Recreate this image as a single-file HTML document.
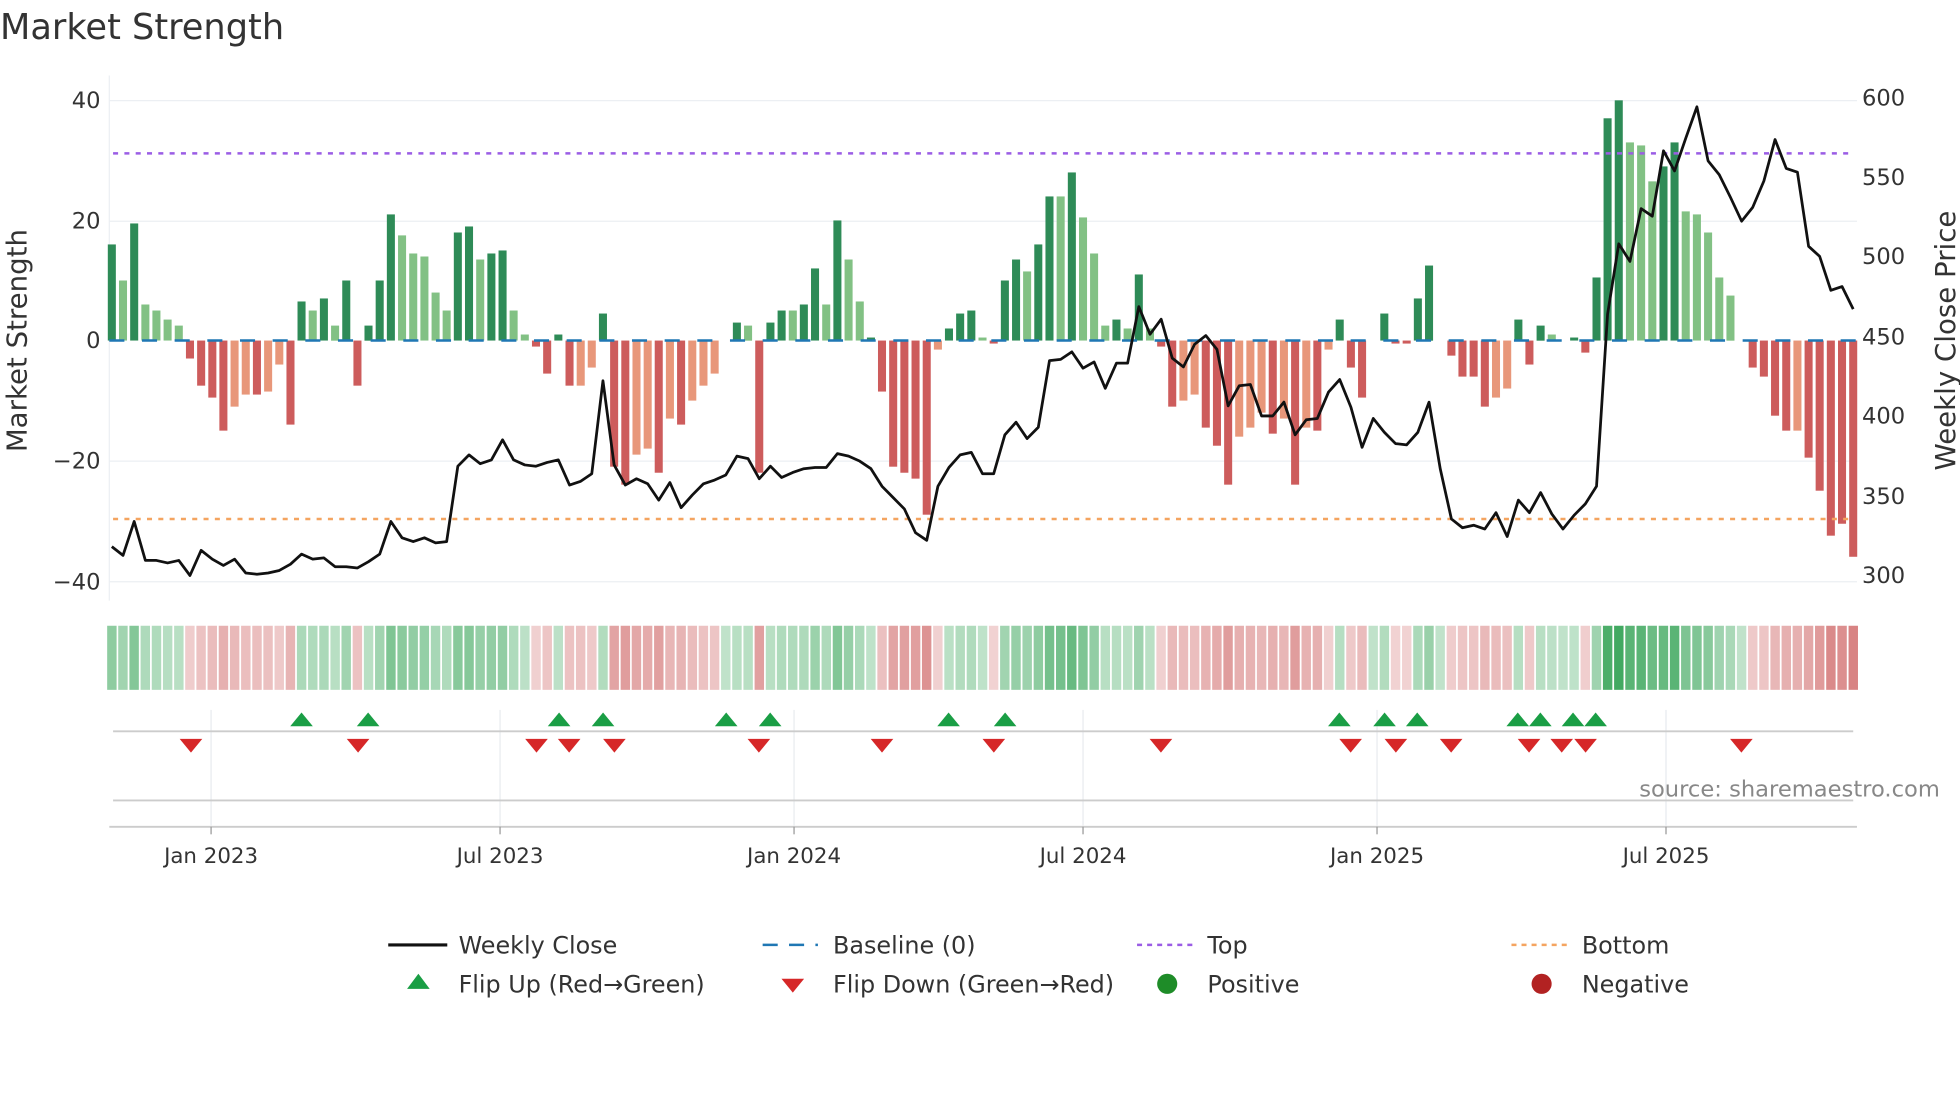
<!DOCTYPE html>
<html><head><meta charset="utf-8"><style>
html,body{margin:0;padding:0;background:#fff;}
svg{display:block;font-family:"DejaVu Sans","Liberation Sans",sans-serif;}
</style></head><body>
<svg id="s" width="1960" height="1102" viewBox="0 0 1560 877" xmlns="http://www.w3.org/2000/svg">
<rect width="1560" height="877" fill="#fff"/>
<text x="0" y="31" font-size="28" fill="#333">Market Strength</text>
<g stroke="#eceff3" stroke-width="1">
<line x1="87" x2="1478" y1="80" y2="80"/><line x1="87" x2="1478" y1="176" y2="176"/>
<line x1="87" x2="1478" y1="367" y2="367"/><line x1="87" x2="1478" y1="463" y2="463"/>
</g>
<line x1="87" x2="87" y1="60" y2="478" stroke="#eceff3"/>
<g font-size="18" fill="#333" text-anchor="end">
<text x="80" y="86">40</text><text x="80" y="182">20</text><text x="80" y="277">0</text>
<text x="80" y="373">−20</text><text x="80" y="469">−40</text>
</g>
<g font-size="18" fill="#333">
<text x="1482" y="84">600</text><text x="1482" y="147">550</text><text x="1482" y="210">500</text>
<text x="1482" y="274">450</text><text x="1482" y="337">400</text><text x="1482" y="401">350</text><text x="1482" y="464">300</text>
</g>
<text transform="translate(21,271) rotate(-90)" font-size="22" fill="#333" text-anchor="middle">Market Strength</text>
<text transform="translate(1556,271) rotate(-90)" font-size="22" fill="#333" text-anchor="middle">Weekly Close Price</text>
<g id="bars"></g>
<line x1="87" x2="1478" y1="271" y2="271" stroke="#1f77b4" stroke-width="2" stroke-dasharray="12,14"/>
<line x1="90" x2="1475" y1="122" y2="122" stroke="#9b5de5" stroke-width="2" stroke-dasharray="4,5"/>
<line x1="90" x2="1475" y1="413" y2="413" stroke="#f4a460" stroke-width="2" stroke-dasharray="4,5"/>
<polyline id="price" fill="none" stroke="#111" stroke-width="2.2" stroke-linejoin="round"/>
<g id="heat"></g>
<g stroke="#e8ebef"><line x1="168" x2="168" y1="565" y2="657"/><line x1="398" x2="398" y1="565" y2="657"/><line x1="632" x2="632" y1="565" y2="657"/><line x1="862" x2="862" y1="565" y2="657"/><line x1="1096" x2="1096" y1="565" y2="657"/><line x1="1326" x2="1326" y1="565" y2="657"/></g>
<line x1="90" x2="1475" y1="582" y2="582" stroke="#ccc" stroke-width="1.5"/>
<line x1="90" x2="1475" y1="637" y2="637" stroke="#ccc" stroke-width="1.5"/>
<line x1="87" x2="1478" y1="658" y2="658" stroke="#ccc" stroke-width="1.5"/>
<g stroke="#999"><line x1="168" x2="168" y1="658" y2="664"/><line x1="398" x2="398" y1="658" y2="664"/><line x1="632" x2="632" y1="658" y2="664"/><line x1="862" x2="862" y1="658" y2="664"/><line x1="1096" x2="1096" y1="658" y2="664"/><line x1="1326" x2="1326" y1="658" y2="664"/></g>
<g id="mk"></g>
<text x="1544" y="634" font-size="18" fill="#888" text-anchor="end">source: sharemaestro.com</text>
<g font-size="17" fill="#333" text-anchor="middle">
<text x="168" y="687">Jan 2023</text><text x="398" y="687">Jul 2023</text><text x="632" y="687">Jan 2024</text>
<text x="862" y="687">Jul 2024</text><text x="1096" y="687">Jan 2025</text><text x="1326" y="687">Jul 2025</text>
</g>
<g font-size="19" fill="#333">
<line x1="309" x2="356" y1="752" y2="752" stroke="#111" stroke-width="2.5"/><text x="365" y="759">Weekly Close</text>
<line x1="607" x2="651" y1="752" y2="752" stroke="#1f77b4" stroke-width="2" stroke-dasharray="12,9"/><text x="663" y="759">Baseline (0)</text>
<line x1="905" x2="949" y1="752" y2="752" stroke="#9b5de5" stroke-width="2" stroke-dasharray="4,4"/><text x="961" y="759">Top</text>
<line x1="1203" x2="1247" y1="752" y2="752" stroke="#f4a460" stroke-width="2" stroke-dasharray="4,4"/><text x="1259" y="759">Bottom</text>
<polygon points="324,787 342,787 333,775" fill="#1a9e45"/><text x="365" y="790">Flip Up (Red→Green)</text>
<polygon points="622,779 640,779 631,790" fill="#d62728"/><text x="663" y="790">Flip Down (Green→Red)</text>
<circle cx="929" cy="783" r="8" fill="#1e8c28"/><text x="961" y="790">Positive</text>
<circle cx="1227" cy="783" r="8" fill="#b22222"/><text x="1259" y="790">Negative</text>
</g>
</svg>
<script>
var v=[16,10,19.5,6,5,3.5,2.5,-3,-7.5,-9.5,-15,-11,-9,-9,-8.5,-4,-14,6.5,5,7,2.5,10,-7.5,2.5,10,21,17.5,14.5,14,8,5,18,19,13.5,14.5,15,5,1,-1,-5.5,1,-7.5,-7.5,-4.5,4.5,-21,-24,-19,-18,-22,-13,-14,-10,-7.5,-5.5,0,3,2.5,-22,3,5,5,6,12,6,20,13.5,6.5,0.5,-8.5,-21,-22,-23,-29,-1.5,2,4.5,5,0.5,-0.5,10,13.5,11.5,16,24,24,28,20.5,14.5,2.5,3.5,2,11,2,-1,-11,-10,-9,-14.5,-17.5,-24,-16,-14.5,-12,-15.5,-13,-24,-14.5,-15,-1.5,3.5,-4.5,-9.5,0,4.5,-0.5,-0.5,7,12.5,0,-2.5,-6,-6,-11,-9.5,-8,3.5,-4,2.5,1,0,0.5,-2,10.5,37,40,33,32.5,26.5,29,33,21.5,21,18,10.5,7.5,0,-4.5,-6,-12.5,-15,-15,-19.5,-25,-32.5,-30.5,-36];
var light={1:1,3:1,4:1,5:1,6:1,18:1,20:1,26:1,27:1,28:1,29:1,30:1,33:1,36:1,37:1,57:1,61:1,64:1,66:1,67:1,78:1,82:1,85:1,87:1,88:1,89:1,91:1,93:1,129:1,136:1,137:1,138:1,141:1,142:1,143:1,144:1,145:1};
var orange={11:1,12:1,14:1,15:1,42:1,43:1,47:1,48:1,50:1,52:1,53:1,54:1,74:1,96:1,97:1,101:1,102:1,103:1,105:1,107:1,109:1,124:1,125:1,151:1};
var p=[435,442,415,446,446,448,446,458,438,445,450,445,456,457,456,454,449,441,445,444,451,451,452,447,441,415,428,431,428,432,431,371,362,369,366,350,366,370,371,368,366,386,383,377,303,370,386,381,385,398,384,404,394,385,382,378,363,365,381,371,380,376,373,372,372,361,363,367,373,387,396,405,424,430,387,372,362,360,377,377,346,336,349,340,287,286,280,293,288,309,289,289,244,266,254,285,292,274,267,278,323,307,306,331,331,320,346,334,333,312,302,324,356,333,344,353,354,344,320,373,413,420,418,421,408,427,398,408,392,409,421,410,401,387,250,194,208,166,172,120,136,110,85,128,139,157,176,165,144,111,134,137,196,204,231,228,246];
var N=v.length,x0=89,dx=(1475-89)/(N-1),b='',h='',pts=[];
for(var i=0;i<N;i++){var x=x0+i*dx,y=271,val=v[i],hh=Math.abs(val)*4.78,c;
 if(val>=0)c=light[i]?'#82c184':'#2e8b57';else c=orange[i]?'#e8977a':'#cd5c5c';
 if(hh>0.3)b+='<rect x="'+(x-3.2).toFixed(1)+'" y="'+(val>=0?y-hh:y).toFixed(1)+'" width="6.4" height="'+hh.toFixed(1)+'" fill="'+c+'"/>';
 var a=0.3+Math.min(Math.abs(val),40)/40*0.6;
 var hc=val>=0?'rgba(46,160,80,'+a.toFixed(2)+')':'rgba(200,80,80,'+(a*0.85).toFixed(2)+')';
 h+='<rect x="'+(x-dx/2+0.7).toFixed(1)+'" y="498" width="'+(dx-1.4).toFixed(1)+'" height="51" fill="'+hc+'"/>';
 pts.push(x.toFixed(1)+','+p[i]);}
document.getElementById('bars').innerHTML=b;
document.getElementById('heat').innerHTML=h;
document.getElementById('price').setAttribute('points',pts.join(' '));
var up=[240,293,445,480,578,613,755,800,1066,1102,1128,1208,1226,1252,1270],dn=[152,285,427,453,489,604,702,791,924,1075,1111,1155,1217,1243,1262,1386],m='';
up.forEach(function(x){m+='<polygon points="'+(x-9)+',578 '+(x+9)+',578 '+x+',567" fill="#1a9e45"/>';});
dn.forEach(function(x){m+='<polygon points="'+(x-9)+',588 '+(x+9)+',588 '+x+',599" fill="#d62728"/>';});
document.getElementById('mk').innerHTML=m;
</script>
</body></html>
